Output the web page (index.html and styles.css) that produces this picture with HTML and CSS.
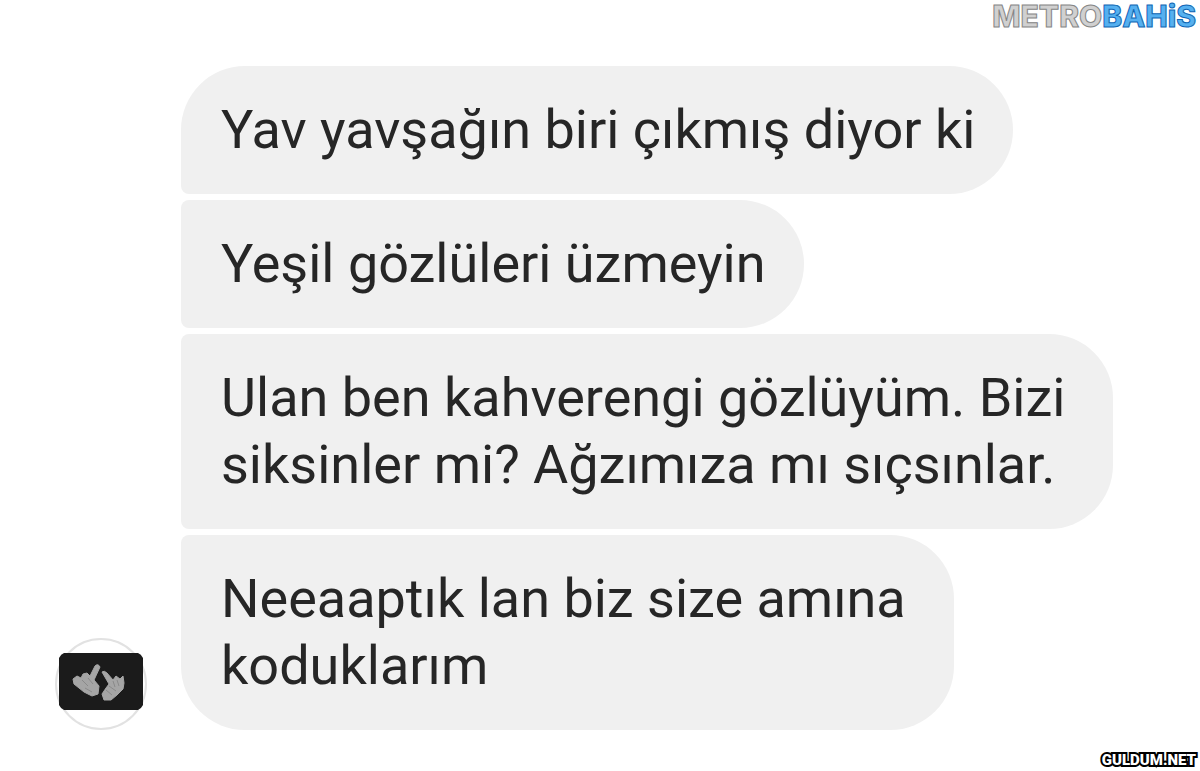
FILE: index.html
```html
<!DOCTYPE html>
<html lang="tr">
<head>
<meta charset="utf-8">
<meta name="viewport" content="width=device-width, initial-scale=1">
<title>Mesajlar</title>
<link rel="stylesheet" href="styles.css">
</head>
<body>
<div class="page">
  <header class="brand"><span class="brand-metro">METRO</span><span class="brand-bahis">BAHiS</span></header>
  <main class="chat">
    <svg class="avatar" viewBox="0 0 92 92" role="img" aria-label="Profil resmi">
      <circle cx="46" cy="46" r="45" fill="#fff" stroke="#e2e2e2" stroke-width="2"/>
      <path d="M9 15H83Q86 16 88 20V67Q86 71 83 72H9Q6 71 4 67V20Q6 16 9 15Z" fill="#1b1b1b"/>
      <g fill="#a5a5a5" stroke="#a5a5a5" stroke-width="1" stroke-linejoin="round">
        <path d="M18 41L22 38L26 40L28 36L32 35L35 38L40 28Q43 25 45 29L39 42L44 48L43 56L37 58L29 54L24 50L19 46Z"/>
        <path d="M47 34Q49 32 52 35L58 42L61 38L65 41L68 38L69 45L68 51L62 57L56 62L49 62L47 56L51 50L54 46Z"/>
      </g>
      <path d="M27 42L33 48M33 40L38 46M30 50L37 54M58 43L60 49M62 42L64 48M51 52L57 57M54 48L61 53" fill="none" stroke="#8a8a8a" stroke-width="1"/>
    </svg>
    <div class="messages">
      <p class="bubble bubble-first">Yav yavşağın biri çıkmış diyor ki</p>
      <p class="bubble">Yeşil gözlüleri üzmeyin</p>
      <p class="bubble bubble-long">Ulan ben kahverengi gözlüyüm. Bizi<br>siksinler mi? Ağzımıza mı sıçsınlar.</p>
      <p class="bubble bubble-long bubble-last">Neeaaptık lan biz size amına<br>koduklarım</p>
    </div>
  </main>
  <footer class="site">GULDUM.NET</footer>
</div>
</body>
</html>
```
FILE: styles.css
```css
* {
  box-sizing: border-box;
}

body {
  margin: 0;
  background: #fff;
  font-family: Roboto, "Noto Sans", sans-serif;
}

.page {
  display: flex;
  flex-direction: column;
  min-height: 100vh;
}

.brand {
  display: flex;
  justify-content: flex-end;
  padding: 0 4px;
  font: 800 30px/32px Inter, Roboto, sans-serif;
}

.brand-metro {
  color: #d0d0d0;
  -webkit-text-stroke: 1px #858585;
}

.brand-bahis {
  color: #55b0f0;
  -webkit-text-stroke: 1px #0f66b4;
}

.chat {
  display: flex;
  align-items: flex-end;
  gap: 34px;
  padding: 34px 55px 0;
}

.avatar {
  flex: none;
  width: 92px;
  height: 92px;
}

.messages {
  display: flex;
  flex-direction: column;
  align-items: flex-start;
  gap: 6px;
}

.bubble {
  margin: 0;
  padding: 30px 38px 31px 40px;
  border-radius: 8px 64px 64px 8px;
  background: #f0f0f0;
  color: #262626;
  font-size: 54px;
  line-height: 67px;
}

.bubble-long {
  padding-right: 48px;
}

.bubble-first {
  border-top-left-radius: 64px;
}

.bubble-last {
  border-bottom-left-radius: 64px;
}

.site {
  margin-top: auto;
  padding: 0 4px 2px;
  text-align: right;
  color: #fff;
  font: 900 15px/18px Roboto, sans-serif;
  -webkit-text-stroke: 4px #000;
  paint-order: stroke fill;
}
```
